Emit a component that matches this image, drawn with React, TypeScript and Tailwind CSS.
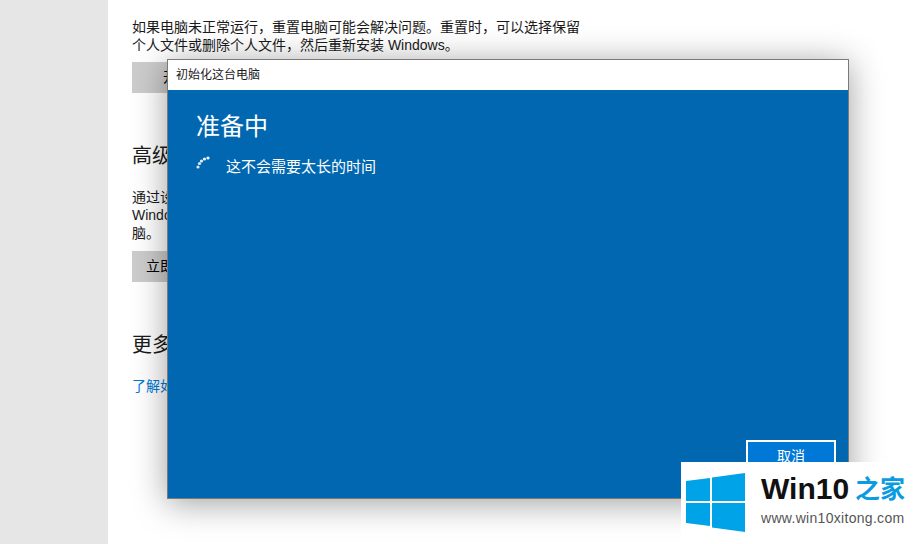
import React from 'react';

const FONT = '"Liberation Sans", "Noto Sans CJK SC", sans-serif';

// spinner dots, brighter towards the head
const DOTS = [
  { cx: 12, cy: 2, o: 1 },
  { cx: 8.5, cy: 3, o: 0.95 },
  { cx: 5.5, cy: 5, o: 0.9 },
  { cx: 3.5, cy: 7.5, o: 0.85 },
  { cx: 2, cy: 11, o: 0.85 },
];

const Spinner = () => (
  <svg width="14" height="14" viewBox="0 0 14 14" className="mt-[1px] shrink-0">
    {DOTS.map((d, i) => (
      <circle key={i} cx={d.cx} cy={d.cy} r={1.6} fill="#fff" opacity={d.o} />
    ))}
  </svg>
);

const WinLogo = () => (
  <svg width="60" height="60" viewBox="0 0 60 60" className="shrink-0">
    <polygon points="0,8 24,5 24,28 0,28" fill="#00a2e8" />
    <polygon points="26,4.6 59,0 59,28 26,28" fill="#00a2e8" />
    <polygon points="0,30 24,30 24,53 0,50" fill="#00a2e8" />
    <polygon points="26,30 59,30 59,59 26,54.6" fill="#00a2e8" />
  </svg>
);

export default function App() {
  return (
    <div className="relative flex h-[544px] w-[916px] overflow-hidden bg-white text-black" style={{ fontFamily: FONT }}>
      {/* Sidebar */}
      <div className="w-[108px] shrink-0 bg-[#e6e6e6]" />

      {/* Settings page behind the dialog */}
      <div className="flex-1 pl-6 pt-[18px]">
        <p className="w-[460px] text-[14px] leading-[18px] text-[#1a1a1a]">
          如果电脑未正常运行，重置电脑可能会解决问题。重置时，可以选择保留个人文件或删除个人文件，然后重新安装 Windows。
        </p>
        <button className="mt-[8px] flex h-[31px] w-[90px] items-center justify-center bg-[#cccccc] text-[14px]">开始</button>
        <h2 className="mt-[50px] text-[20px] leading-[26px] text-[#1a1a1a]">高级启动</h2>
        <p className="mt-[19px] w-[460px] text-[14px] leading-[18px] text-[#1a1a1a]">
          通过设备或磁盘启动，更改固件设置，更改
          <br />
          Windows 启动设置，或者从系统映像还原电
          <br />
          脑。
        </p>
        <button className="mt-[9px] flex h-[31px] items-center justify-center bg-[#cccccc] px-[14px] text-[14px]">立即重新启动</button>
        <h2 className="mt-[50px] text-[20px] leading-[26px] text-[#1a1a1a]">更多恢复选项</h2>
        <a className="mt-[18px] block text-[14px] leading-[20px] text-[#0078d7]">了解如何进行 Windows 的全新安装</a>
      </div>

      {/* Dialog */}
      <div className="absolute left-[167px] top-[59px] flex h-[440px] w-[682px] flex-col border border-[#7a7a7a] shadow-[0_4px_32px_rgba(0,0,0,0.38)]">
        <div className="flex h-[30px] shrink-0 items-center bg-white pl-2 text-[12px] text-[#1a1a1a]">初始化这台电脑</div>
        <div className="relative flex-1 bg-[#0067b0] pl-7 pt-[19px] text-white">
          <h1 className="text-[24px] font-normal leading-[36px]">准备中</h1>
          <div className="mt-[10px] flex items-start gap-[16px] text-[15px] leading-[24px]">
            <Spinner />
            <span>这不会需要太长的时间</span>
          </div>
          <button className="absolute right-[12px] top-[350px] flex h-[32px] w-[90px] items-center justify-center border-2 border-white bg-[#0078d7] text-[14px] text-white">
            取消
          </button>
        </div>
      </div>

      {/* Watermark */}
      <div className="absolute left-[681px] top-[462px] flex h-[82px] w-[235px] items-start gap-[15px] bg-white pl-[5px] pt-[11px]">
        <WinLogo />
        <div className="flex flex-col">
          <div className="flex items-center gap-[6px] leading-[32px]">
            <span className="text-[30px] font-bold text-[#111]">Win10</span>
            <span className="text-[25px] font-bold text-[#0a9be0]">之家</span>
          </div>
          <span className="mt-[5px] text-[14px] leading-[16px] tracking-[0.3px] text-[#555]">www.win10xitong.com</span>
        </div>
      </div>
    </div>
  );
}
